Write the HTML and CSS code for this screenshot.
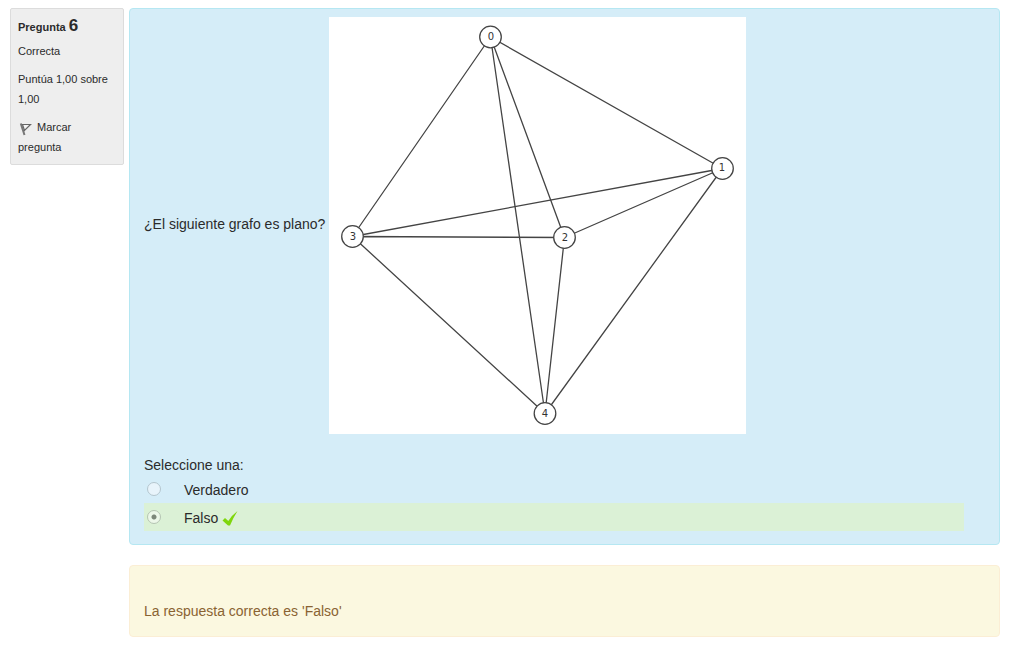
FILE: index.html
```html
<!DOCTYPE html>
<html lang="es">
<head>
<meta charset="utf-8">
<meta name="viewport" content="width=device-width, initial-scale=1">
<title>Pregunta 6</title>
<link rel="stylesheet" href="styles.css">
</head>
<body>
<main class="question">
  <aside class="info">
    <h3 class="info-title">Pregunta <span class="info-number">6</span></h3>
    <p class="info-state">Correcta</p>
    <p class="info-grade">Puntúa 1,00 sobre 1,00</p>
    <a class="info-flag" href="#"><svg class="flag-icon" viewBox="0 0 16 16" aria-hidden="true"><path d="M2.800 3.500 6.500 15" fill="none" stroke="#777" stroke-width="2"/><path d="M4.500 4.500H12.500L6.500 10.500Z" fill="#f4f4f4" stroke="#666" stroke-width="1.200"/></svg>Marcar pregunta</a>
  </aside>
  <div class="content">
    <section class="formulation">
      <div class="prompt">
        <p class="prompt-text">¿El siguiente grafo es plano?</p>
        <svg class="graph" viewBox="329 17 417 417" role="img" aria-label="Grafo de cinco vértices">
          <rect x="329" y="17" width="417" height="417" fill="#fff"/>
          <g class="edges">
            <path d="M490.500 37 722.500 168.500M490.500 37 564.500 237.500M490.500 37 352.500 236.500M490.500 37 545 413.500"/>
            <path d="M722.500 168.500 564.500 237.500M722.500 168.500 352.500 236.500M722.500 168.500 545 413.500"/>
            <path d="M564.500 237.500 352.500 236.500M564.500 237.500 545 413.500M352.500 236.500 545 413.500"/>
          </g>
          <g class="nodes">
            <circle cx="490.500" cy="37" r="10.800"/>
            <circle cx="722.500" cy="168.500" r="10.800"/>
            <circle cx="564.500" cy="237.500" r="10.800"/>
            <circle cx="352.500" cy="236.500" r="10.800"/>
            <circle cx="545" cy="413.500" r="10.800"/>
          </g>
          <g class="labels">
            <text x="491" y="40">0</text>
            <text x="722" y="171">1</text>
            <text x="565" y="241">2</text>
            <text x="353" y="240">3</text>
            <text x="545" y="417">4</text>
          </g>
        </svg>
      </div>
      <fieldset class="answers">
        <legend class="answers-title">Seleccione una:</legend>
        <div class="answer">
          <input class="radio" type="radio" name="respuesta" id="verdadero" disabled>
          <label class="answer-label" for="verdadero">Verdadero</label>
        </div>
        <div class="answer correct">
          <input class="radio" type="radio" name="respuesta" id="falso" checked disabled>
          <label class="answer-label" for="falso">Falso</label>
          <svg class="check-icon" viewBox="0 0 16 16" role="img" aria-label="Correcta"><path d="M0.500 10.500 3 8 6.300 11Q10 5 15.500 1 11 8 8 15.500H6Z" fill="#7fd60c"/></svg>
        </div>
      </fieldset>
    </section>
    <section class="feedback">La respuesta correcta es 'Falso'</section>
  </div>
</main>
</body>
</html>
```
FILE: styles.css
```css
* { box-sizing: border-box; }

body {
  margin: 0;
  background: #fff;
  color: #2b2b2b;
  font-family: "Liberation Sans", Arial, sans-serif;
  font-size: 14px;
  line-height: 20px;
}

.question {
  display: flex;
  align-items: flex-start;
  gap: 5px;
  padding: 8px 18px 8px 10px;
}

.info {
  flex: 0 0 114px;
  padding: 8px 7px 7px;
  border: 1px solid #dcdcdc;
  border-radius: 2px;
  background: #eee;
  font-size: 11px;
}

.info-title {
  margin: 0 0 4px;
  font-size: 11px;
  line-height: 20px;
  height: 20px;
}

.info-number {
  font-size: 17px;
  line-height: 16px;
}

.info-state,
.info-grade { margin: 0 0 8px; }

.info-flag {
  display: block;
  color: inherit;
  text-decoration: none;
}

.flag-icon {
  width: 16px;
  height: 16px;
  margin-right: 3px;
  vertical-align: middle;
}

.content {
  flex: 1;
  min-width: 0;
}

.formulation {
  padding: 8px 35px 13px 14px;
  border: 1px solid #b5e7f2;
  border-radius: 4px;
  background: #d5edf8;
}

.prompt {
  display: flex;
  align-items: center;
  gap: 4px;
  margin-bottom: 21px;
}

.prompt-text {
  margin: 0;
  padding-bottom: 4px;
  white-space: nowrap;
}

.graph {
  display: block;
  flex: 0 1 417px;
  min-width: 0;
}

.edges,
.nodes {
  fill: #fff;
  stroke: #444;
  stroke-width: 1.3;
}

.edges { fill: none; }

.labels {
  fill: #333;
  font-family: "DejaVu Sans", sans-serif;
  font-size: 10px;
  text-anchor: middle;
}

.answers {
  min-width: 0;
  margin: 0;
  padding: 0;
  border: 0;
}

.answers-title {
  padding: 0;
}

.answer {
  display: flex;
  align-items: center;
  height: 28px;
  padding-left: 3px;
}

.answer-label { padding-top: 2px; }

.correct { background: #dbf1d6; }

.radio {
  appearance: none;
  width: 14px;
  height: 14px;
  margin: 0 23px 0 0;
  border: 1px solid #b4c6ce;
  border-radius: 50%;
  background: #e8f4fb;
}

.radio:checked {
  border-color: #b5c4b3;
  background: radial-gradient(circle, #7c877a 0 2px, #ecf7e9 3px);
}

.check-icon {
  width: 16px;
  height: 16px;
  margin: 2px 0 0 4px;
}

.feedback {
  margin-top: 20px;
  padding: 35px 14px 15px;
  border: 1px solid #fbeed5;
  border-radius: 4px;
  background: #fbf8e0;
  color: #8a6332;
}
```
